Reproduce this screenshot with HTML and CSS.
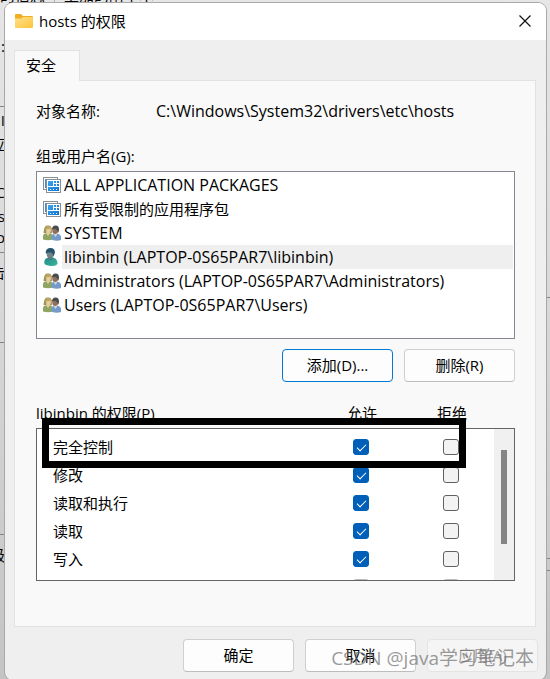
FILE: index.html
```html
<!DOCTYPE html>
<html lang="zh-CN">
<head>
  <meta charset="UTF-8" />
  <title>hosts 的权限</title>
  <meta name="viewport" content="width=device-width, initial-scale=1.0" />
  <link rel="stylesheet" href="styles.css">
</head>
<body>
  <!-- icons used by the lists -->
  <svg class="sprite" aria-hidden="true">
    <linearGradient id="blue" x1="0" y1="0" x2="1" y2="1"><stop stop-color="#41a6f0"/><stop offset="1" stop-color="#0873cf"/></linearGradient>
    <linearGradient id="yellow" x1="0" y1="0" x2="1" y2="1"><stop stop-color="#ffe08a"/><stop offset="1" stop-color="#fcc43c"/></linearGradient>
    <linearGradient id="teal" x1="0" y1="0" x2="1" y2="1"><stop stop-color="#1f8a86"/><stop offset="1" stop-color="#3fb5a0"/></linearGradient>
    <symbol id="package" viewBox="0 0 18 16">
      <rect x="0.5" y="0.5" width="14" height="12" fill="#fff" stroke="#8a8f96"/>
      <path d="M2 2h11v1H3v8H2z" fill="#2f92e2"/>
      <rect x="3.500" y="2.500" width="14" height="13" fill="#fff" stroke="#8a8f96"/>
      <path d="M5 4h5v5H5zM11 4h2v2h-2zM14 4h2v2h-2zM11 7h2v2h-2zM14 7h2v2h-2zM5 10h11v4H5z" fill="url(#blue)"/>
      <path d="M7 12h1v1H7zM10 12h1v1h-1zM13 12h1v1h-1z" fill="#fff"/>
    </symbol>
    <symbol id="group" viewBox="0 0 18 16">
      <path d="M0.500 8C1 3 1.500 0.500 5 0.500S9 3 9 8z" fill="#9c9a55"/>
      <path d="M0 14.500V11c0-2 2-3 5-3s5 1 5 3v3.500c-3 1-7 1-10 0z" fill="#8fa660"/>
      <path d="M3.500 7h3v2L5 11 3.500 9z" fill="#e5cba8"/>
      <ellipse cx="5.500" cy="5" rx="2.300" ry="3.200" fill="#eccba2"/>
      <path d="M2.500 5c0-3 1-4 3-4s3 1 3 3C6 4 4 3.500 2.500 5z" fill="#bda663"/>
      <path d="M8.500 14.500V12c0-2 2-3.500 4.500-3.500s5 1.500 5 3.500v3c-3 1-7 1-9.500-0.500z" fill="#7599c9"/>
      <path d="M11 8h3v2l-1.500 2L11 10z" fill="#c8d3df"/>
      <ellipse cx="12" cy="5.500" rx="2.700" ry="3.600" fill="#92705a"/>
      <path d="M9 5c0-3 1-4.500 3.500-4.500S16 2 16 4.500 15 8 14.500 8c0-2-0.500-3-1.500-4-1 0-3-0.500-4 1z" fill="#4b4b4d"/>
    </symbol>
    <symbol id="user" viewBox="0 0 18 18">
      <path d="M1.500 16C1 12 2 10 6 9.500h3.500c3.500 0.500 5 3 5 6.500-1 1-3 2-5 2-3 0-6-0.500-8-2z" fill="url(#teal)"/>
      <path d="M5 8h4.500v3C8.500 12.500 6 12 5 10.500z" fill="#587779"/>
      <ellipse cx="7" cy="6" rx="3.300" ry="4" fill="#6f8386"/>
      <path d="M3 6c-1-3.500 1-6 4.500-6 4 0 5 3 4 6-1 2-1 2-1.500 3 0-2 0-3.500-1.500-4.500C6 4.500 4 4 3 6z" fill="#24526b"/>
    </symbol>
  </svg>

  <!-- window that lies behind the dialog -->
  <div class="backdrop" aria-hidden="true">
    <div class="backdrop-top"><span>的信息</span><span class="divider"></span><span>上加的附甲本</span></div>
    <div class="edge left">
      <span class="bit y40">:</span>
      <i class="line y106"></i>
      <span class="bit y110">I</span>
      <span class="bit y134">应</span>
      <span class="bit y182">C</span>
      <span class="bit y206">s</span>
      <span class="bit y228">o</span>
      <i class="line y252"></i>
      <span class="bit y262">击</span>
      <i class="line y342"></i>
      <i class="line y534"></i>
      <span class="bit y544">级</span>
    </div>
    <div class="edge right">
      <i class="line y297"></i>
      <i class="line y558"></i>
      <i class="line y570"></i>
    </div>
  </div>

  <div class="dialog">
    <div class="titlebar">
      <svg class="folder" viewBox="0 0 18 14" aria-hidden="true">
        <path d="M0 1Q0 0 1 0H6l2 2h9Q18 2 18 3V8H0z" fill="#f0ae25"/>
        <path d="M0 4.500h6.500L8 3h9Q18 3 18 4V13Q18 14 17 14H1Q0 14 0 13z" fill="url(#yellow)"/>
      </svg>
      <h1 class="title">hosts 的权限</h1>
      <button class="close" aria-label="关闭">
        <svg viewBox="0 0 12 12"><path d="M0.500 0.500l11 11M11.500 0.500l-11 11" stroke="#111" stroke-width="1.200" fill="none"/></svg>
      </button>
    </div>

    <div class="content">
      <button class="tab">安全</button>
      <div class="panel">
        <div class="object">
          <span class="object-label">对象名称:</span>
          <span class="latin">C:\Windows\System32\drivers\etc\hosts</span>
        </div>

        <div class="label">组或用户名(G):</div>
        <ul class="users">
          <li><svg class="icon"><use href="#package"/></svg><span class="latin">ALL APPLICATION PACKAGES</span></li>
          <li><svg class="icon"><use href="#package"/></svg><span>所有受限制的应用程序包</span></li>
          <li><svg class="icon"><use href="#group"/></svg><span class="latin">SYSTEM</span></li>
          <li class="selected"><svg class="icon"><use href="#user"/></svg><span class="latin">libinbin (LAPTOP-0S65PAR7\libinbin)</span></li>
          <li><svg class="icon"><use href="#group"/></svg><span class="latin">Administrators (LAPTOP-0S65PAR7\Administrators)</span></li>
          <li><svg class="icon"><use href="#group"/></svg><span class="latin">Users (LAPTOP-0S65PAR7\Users)</span></li>
        </ul>

        <div class="buttons">
          <button class="btn focused">添加(D)...</button>
          <button class="btn">删除(R)</button>
        </div>

        <div class="permissions">
          <div class="row head"><span>libinbin 的权限(P)</span><span class="col">允许</span><span class="col">拒绝</span></div>
          <div class="list">
            <div class="rows">
              <div class="row"><span>完全控制</span><span class="col"><input type="checkbox" aria-label="允许完全控制" checked></span><span class="col"><input type="checkbox" aria-label="拒绝完全控制"></span></div>
              <div class="row"><span>修改</span><span class="col"><input type="checkbox" aria-label="允许修改" checked></span><span class="col"><input type="checkbox" aria-label="拒绝修改"></span></div>
              <div class="row"><span>读取和执行</span><span class="col"><input type="checkbox" aria-label="允许读取和执行" checked></span><span class="col"><input type="checkbox" aria-label="拒绝读取和执行"></span></div>
              <div class="row"><span>读取</span><span class="col"><input type="checkbox" aria-label="允许读取" checked></span><span class="col"><input type="checkbox" aria-label="拒绝读取"></span></div>
              <div class="row"><span>写入</span><span class="col"><input type="checkbox" aria-label="允许写入" checked></span><span class="col"><input type="checkbox" aria-label="拒绝写入"></span></div>
              <div class="row"><span></span><span class="col"><input type="checkbox" aria-label="允许特殊权限" disabled></span><span class="col"><input type="checkbox" aria-label="拒绝特殊权限" disabled></span></div>
            </div>
            <div class="scrollbar"><div class="thumb"></div></div>
          </div>
          <div class="marker"></div>
        </div>
      </div>

      <div class="buttons footer">
        <button class="btn">确定</button>
        <button class="btn">取消</button>
        <button class="btn" disabled>应用(A)</button>
      </div>
    </div>
    <div class="watermark">CSDN @java学习笔记本</div>
  </div>
</body>
</html>
```
FILE: styles.css
```css
* {
  box-sizing: border-box;
}

body {
  position: relative;
  margin: 0;
  padding: 3px 4px 0 5px;
  min-height: 100vh;
  color: #000;
  font-family: "Open Sans", "Noto Sans CJK SC", sans-serif;
  font-size: 15px;
  line-height: 24px;
  overflow: hidden;
}

button {
  font: inherit;
  color: inherit;
}

.sprite {
  position: absolute;
  width: 0;
  height: 0;
}

.backdrop {
  position: absolute;
  inset: 0;
  background: linear-gradient(#e6e6e6, #d6d6d6 50%, #c4c4c4);
  overflow: hidden;
}

.backdrop-top {
  display: flex;
  align-items: flex-end;
  gap: 9px;
  height: 24px;
  margin-top: -17px;
}

.divider {
  width: 1px;
  height: 24px;
  background: #b5b5b5;
}

.edge {
  position: absolute;
  top: 0;
  bottom: 0;
  width: 5px;
  overflow: hidden;
}

.edge.left {
  left: 0;
}

.edge.right {
  right: 0;
}

.bit {
  position: absolute;
  right: 0;
}

.line {
  position: absolute;
  width: 100%;
  height: 1px;
  background: #858585;
}

.y40 { top: 34px; }
.y106 { top: 106px; }
.y110 { top: 108px; }
.y134 { top: 132px; }
.y182 { top: 180px; }
.y206 { top: 204px; }
.y228 { top: 225px; }
.y252 { top: 252px; }
.y262 { top: 260px; }
.y297 { top: 297px; }
.y342 { top: 342px; }
.y534 { top: 534px; }
.y544 { top: 543px; }
.y558 { top: 558px; }
.y570 { top: 570px; }

.dialog {
  position: relative;
  background: #efefef;
  border-radius: 8px;
  box-shadow: 0 0 0 1px #a8a8a8;
  overflow: hidden;
}

.titlebar {
  display: flex;
  align-items: center;
  height: 37px;
  padding: 0 15px 1px 10px;
  background: #fff;
}

.folder {
  width: 18px;
  height: 14px;
}

.title {
  flex: 1;
  margin: 0 0 0 6px;
  font-size: 15px;
  font-weight: normal;
}

.close {
  display: flex;
  padding: 0;
  border: none;
  background: none;
}

.close svg {
  width: 12px;
  height: 12px;
}

.content {
  padding: 10px 8px 8px 9px;
}

.tab {
  display: block;
  position: relative;
  width: 66px;
  height: 31px;
  margin-bottom: -1px;
  padding: 0 0 2px 11px;
  border: 1px solid #e2e2e2;
  border-bottom: none;
  background: #f9f9f9;
  text-align: left;
}

.panel {
  margin-right: 2px;
  padding: 18px 20px 45px 21px;
  border: 1px solid #e2e2e2;
  background: #f9f9f9;
}

.latin {
  font-size: 16px;
}

.object {
  display: flex;
  margin-bottom: 21px;
}

.object-label {
  width: 120px;
}

.label {
  margin-bottom: 3px;
}

.users {
  height: 168px;
  margin: 0;
  padding: 1px 1px 1px 6px;
  border: 1px solid #828790;
  background: #fff;
  list-style: none;
}

.users li {
  display: flex;
  align-items: center;
}

.users span {
  flex: 1;
  padding-left: 2px;
}

.users .selected span {
  background: #efefef;
}

.icon {
  width: 18px;
  height: 18px;
  margin-right: 1px;
}

.buttons {
  display: flex;
  justify-content: flex-end;
  gap: 11px;
  margin-top: 10px;
}

.btn {
  width: 111px;
  height: 33px;
  padding: 0 0 2px;
  border: 1px solid #cfcfcf;
  border-bottom-color: #bdbdbd;
  border-radius: 4px;
  background: #fdfdfd;
}

.btn.focused {
  border-color: #0078d4;
}

.btn:disabled {
  border-color: #e4e4e4;
  background: #f5f5f5;
  color: #9d9d9d;
}

.permissions {
  position: relative;
  margin-top: 17px;
}

.row {
  display: grid;
  grid-template-columns: 1fr 94px 86px;
  align-items: center;
  height: 28px;
}

.head {
  height: 29px;
  padding: 0 20px 2px 0;
}

.col {
  display: flex;
  justify-content: center;
}

.list {
  display: flex;
  height: 153px;
  border: 1px solid #646464;
  background: #fff;
  overflow: hidden;
}

.rows {
  flex: 1;
  padding: 4px 0 0 16px;
}

.scrollbar {
  width: 20px;
  padding: 21px 7px;
  background: #f0f0f0;
}

.thumb {
  width: 6px;
  height: 94px;
  background: #858585;
}

input[type="checkbox"] {
  appearance: none;
  width: 16px;
  height: 16px;
  margin: 0;
  border: 1px solid #616161;
  border-radius: 3px;
  background: #f3f3f3;
}

input[type="checkbox"]:checked {
  display: flex;
  justify-content: center;
  border-color: #005fb8;
  background: #005fb8;
}

input[type="checkbox"]:checked::before {
  content: "";
  width: 4px;
  height: 8px;
  margin-top: 2px;
  border: solid #fff;
  border-width: 0 1px 1px 0;
  transform: rotate(45deg);
}

input[type="checkbox"]:disabled {
  border-color: #bdbdbd;
}

/* box drawn around the full control row */
.marker {
  position: absolute;
  top: 19px;
  left: 6px;
  right: 49px;
  height: 50px;
  border: 7px solid #000;
}

.footer {
  margin-top: 12px;
}

.watermark {
  position: absolute;
  right: 12px;
  bottom: 10px;
  color: rgba(110, 110, 110, 0.7);
  font-size: 19px;
}
```
